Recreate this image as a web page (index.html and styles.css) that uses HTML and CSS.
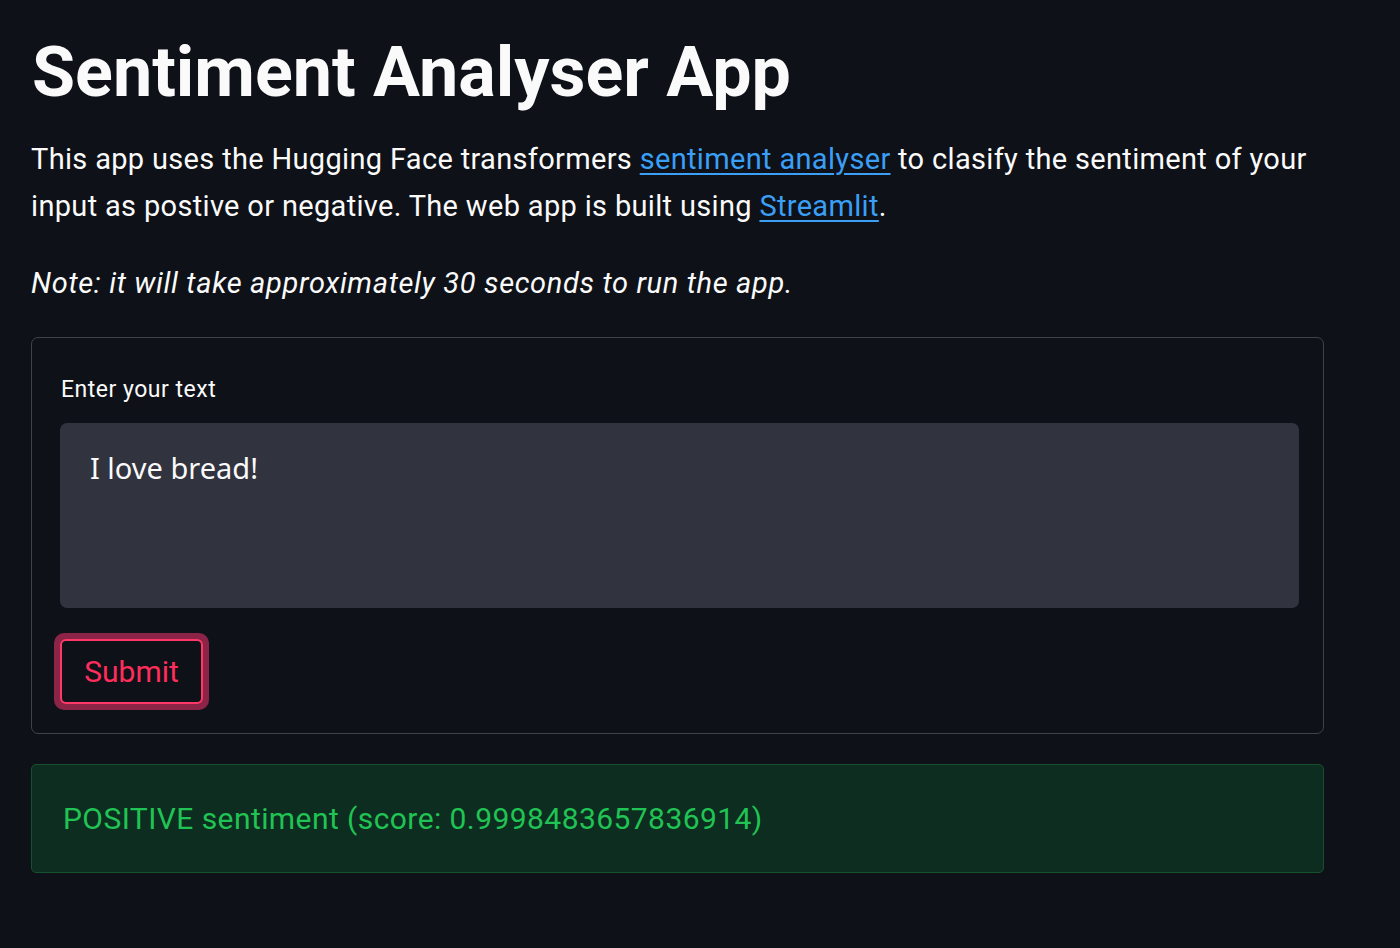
FILE: index.html
```html
<!DOCTYPE html>
<html lang="en">
<head>
<meta charset="utf-8">
<title>Sentiment Analyser App</title>
<link rel="stylesheet" href="styles.css">
</head>
<body>
<main class="main">
  <h1 class="title">Sentiment Analyser App</h1>
  <p class="intro">This app uses the Hugging Face transformers <a href="#">sentiment analyser</a> to clasify the sentiment of your input as postive or negative. The web app is built using <a href="#">Streamlit</a>.</p>
  <p class="note">Note: it will take approximately 30 seconds to run the app.</p>
  <form class="form">
    <label class="label">Enter your text</label>
    <div class="textarea">I love bread!</div>
    <div class="btn-wrap"><button type="button" class="btn">Submit</button></div>
  </form>
  <div class="success">POSITIVE sentiment (score: 0.9998483657836914)</div>
</main>
</body>
</html>
```

FILE: styles.css
```css
html, body {
  margin: 0;
  background: #0e1117;
  height: 100%;
}
body {
  font-family: Roboto, "Liberation Sans", sans-serif;
  color: #fafafa;
}
.main {
  padding: 32px 76px 0 31px;
  width: 1293px;
}
.title {
  font-family: Roboto, sans-serif;
  font-weight: 700;
  font-size: 70px;
  line-height: 80px;
  margin: 0 0 0 1px;
  letter-spacing: 0;
}
.intro {
  font-size: 29px;
  letter-spacing: 0.33px;
  line-height: 47px;
  margin: 24px 0 0 0;
}
.intro a {
  color: #3a9ff5;
  text-decoration: underline;
  text-underline-offset: 4px;
}
.note {
  font-style: italic;
  font-size: 29px;
  letter-spacing: 0.65px;
  line-height: 47px;
  margin: 30px 0 0 0;
}
.form {
  margin-top: 30px;
  border: 1px solid #404249;
  border-radius: 7px;
  padding: 36px 24px 23px 28px;
  display: flex;
  flex-direction: column;
}
.label {
  font-size: 23px;
  letter-spacing: 0.5px;
  line-height: 32px;
  margin-left: 1px;
}
.textarea {
  margin-top: 17px;
  height: 185px;
  background: #31333f;
  border-radius: 7px;
  box-sizing: border-box;
  padding: 24px 30px;
  font-size: 29px;
  line-height: 42px;
  font-family: "Noto Sans", sans-serif;
}
.btn-wrap {
  margin-top: 25px;
  margin-left: -6px;
  align-self: flex-start;
  border-radius: 10px;
  padding: 6px;
  background: #8c2447;
}
.btn {
  display: block;
  background: #0e1117;
  border: 2px solid #ff3867;
  border-radius: 6px;
  color: #ff2d5c;
  font-family: Roboto, sans-serif;
  font-size: 30px;
  width: 143px;
  height: 65px;
  padding: 0;
}
.success {
  margin-top: 30px;
  height: 109px;
  box-sizing: border-box;
  background: #0c2d1f;
  border: 1px solid #16502c;
  border-radius: 5px;
  color: #21c354;
  font-size: 30px;
  letter-spacing: 0.43px;
  padding: 0 31px;
  display: flex;
  align-items: center;
}
```
